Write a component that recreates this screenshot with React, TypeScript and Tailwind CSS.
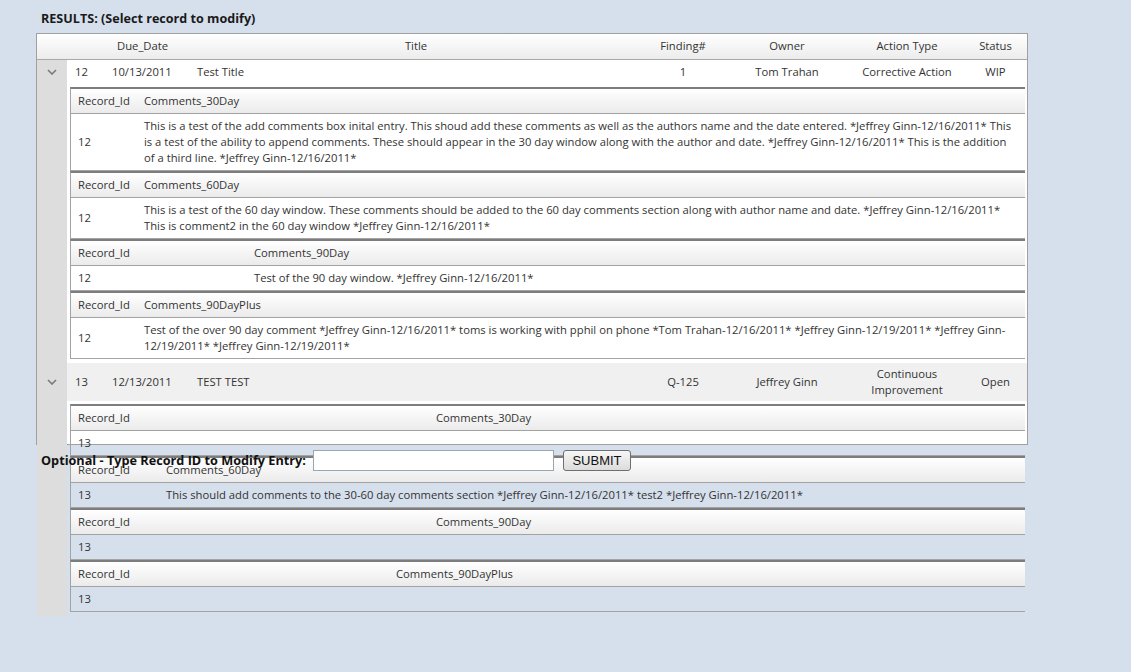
import React from 'react';

interface SubTable {
  label: string;
  // width of the Record_Id column, in px
  idWidth: number;
  id: string;
  lines: string[];
}

interface RecordRow {
  id: string;
  due: string;
  title: string;
  finding: string;
  owner: string;
  action: string[];
  status: string;
  shaded: boolean;
  details: SubTable[];
}

const records: RecordRow[] = [
  {
    id: '12',
    due: '10/13/2011',
    title: 'Test Title',
    finding: '1',
    owner: 'Tom Trahan',
    action: ['Corrective Action'],
    status: 'WIP',
    shaded: false,
    details: [
      {
        label: 'Comments_30Day',
        idWidth: 66,
        id: '12',
        lines: [
          'This is a test of the add comments box inital entry. This shoud add these comments as well as the authors name and the date entered. *Jeffrey Ginn-12/16/2011* This',
          'is a test of the ability to append comments. These should appear in the 30 day window along with the author and date. *Jeffrey Ginn-12/16/2011* This is the addition',
          'of a third line. *Jeffrey Ginn-12/16/2011*',
        ],
      },
      {
        label: 'Comments_60Day',
        idWidth: 66,
        id: '12',
        lines: [
          'This is a test of the 60 day window. These comments should be added to the 60 day comments section along with author name and date. *Jeffrey Ginn-12/16/2011*',
          'This is comment2 in the 60 day window *Jeffrey Ginn-12/16/2011*',
        ],
      },
      {
        label: 'Comments_90Day',
        idWidth: 176,
        id: '12',
        lines: ['Test of the 90 day window. *Jeffrey Ginn-12/16/2011*'],
      },
      {
        label: 'Comments_90DayPlus',
        idWidth: 66,
        id: '12',
        lines: [
          'Test of the over 90 day comment *Jeffrey Ginn-12/16/2011* toms is working with pphil on phone *Tom Trahan-12/16/2011* *Jeffrey Ginn-12/19/2011* *Jeffrey Ginn-',
          '12/19/2011* *Jeffrey Ginn-12/19/2011*',
        ],
      },
    ],
  },
  {
    id: '13',
    due: '12/13/2011',
    title: 'TEST TEST',
    finding: 'Q-125',
    owner: 'Jeffrey Ginn',
    action: ['Continuous', 'Improvement'],
    status: 'Open',
    shaded: true,
    details: [
      { label: 'Comments_30Day', idWidth: 358, id: '13', lines: [''] },
      {
        label: 'Comments_60Day',
        idWidth: 88,
        id: '13',
        lines: ['This should add comments to the 30-60 day comments section *Jeffrey Ginn-12/16/2011* test2 *Jeffrey Ginn-12/16/2011*'],
      },
      { label: 'Comments_90Day', idWidth: 358, id: '13', lines: [''] },
      { label: 'Comments_90DayPlus', idWidth: 318, id: '13', lines: [''] },
    ],
  },
];

const cols = 'grid grid-cols-[30px_38px_85px_452px_82px_126px_114px_63px]';

function Chevron() {
  return (
    <svg width="10" height="6" viewBox="0 0 10 6" className="block">
      <polyline points="1,1 5,5 9,1" fill="none" stroke="#7a7a7a" strokeWidth="1.6" />
    </svg>
  );
}

function DetailTable({ t }: { t: SubTable }) {
  return (
    <div className="border-t-2 border-l border-t-[#7d7d7d] border-l-[#a3a3a3]">
      {/* sub header */}
      <div className="flex h-[25px] items-center bg-gradient-to-b from-white to-[#ebebeb] border-b border-[#a3a3a3]">
        <div className="pl-[7px] shrink-0" style={{ width: t.idWidth }}>Record_Id</div>
        <div className="pl-[7px]">{t.label}</div>
      </div>
      {/* sub data */}
      <div className="flex items-center py-[4px] leading-[16px] border-b border-[#a3a3a3]">
        <div className="pl-[7px] shrink-0" style={{ width: t.idWidth }}>{t.id}</div>
        <div className="pl-[7px] whitespace-nowrap min-h-[16px]">
          {t.lines.map((l, i) => (
            <div key={i}>{l}</div>
          ))}
        </div>
      </div>
    </div>
  );
}

function Record({ r }: { r: RecordRow }) {
  return (
    <>
      <div className={`${cols} items-center ${r.shaded ? 'h-[38px] bg-[#f0f0f0]' : 'h-[24px] bg-white'}`}>
        <div className="h-full bg-[#dddddd] flex items-center justify-center">
          <Chevron />
        </div>
        <div className="pl-[8px]">{r.id}</div>
        <div className="pl-[7px]">{r.due}</div>
        <div className="pl-[7px]">{r.title}</div>
        <div className="text-center">{r.finding}</div>
        <div className="text-center">{r.owner}</div>
        <div className="text-center leading-[16px]">
          {r.action.map((a) => (
            <div key={a}>{a}</div>
          ))}
        </div>
        <div className="text-center">{r.status}</div>
      </div>
      <div className="flex">
        <div className="w-[30px] shrink-0 bg-[#dddddd]" />
        <div className="flex-1 pl-[3px] pr-[2px] pt-[3px] pb-[4px]">
          {r.details.map((t) => (
            <DetailTable key={t.label} t={t} />
          ))}
        </div>
      </div>
    </>
  );
}

export default function App() {
  return (
    <div className="min-h-screen bg-[#d6e0ec] pt-[10px] font-['Open_Sans',sans-serif] text-[11.25px] text-[#333333]">
      <div className="pl-[41px] h-[18px] leading-[18px] font-bold text-[12.6px] text-[#1a1a1a]">
        RESULTS: (Select record to modify)
      </div>

      <div className="ml-[36px] mt-[5px] w-[992px] h-[412px] border border-[#a0a0a0] bg-white">
        {/* column headers */}
        <div className={`${cols} h-[26px] items-center bg-gradient-to-b from-white to-[#ececec] border-b border-[#a9a9a9]`}>
          <div />
          <div />
          <div className="pl-[12px]">Due_Date</div>
          <div className="text-center">Title</div>
          <div className="text-center">Finding#</div>
          <div className="text-center">Owner</div>
          <div className="text-center">Action Type</div>
          <div className="text-center">Status</div>
        </div>
        {records.map((r) => (
          <Record key={r.id} r={r} />
        ))}
      </div>

      <div className="mt-[4px] flex items-center h-[23px] pl-[41px]">
        <span className="w-[272px] shrink-0 font-bold text-[12.7px] text-[#111111]">
          Optional - Type Record ID to Modify Entry:
        </span>
        <input
          type="text"
          className="w-[241px] h-[21px] bg-white border border-[#9aa6b4] outline-none px-1"
        />
        <button className="ml-[9px] w-[68px] h-[21px] rounded-[3px] border border-[#6f6f6f] bg-gradient-to-b from-[#f6f6f6] to-[#dcdcdc] font-['Liberation_Sans',Arial,sans-serif] text-[13px] text-[#111111] leading-none">
          SUBMIT
        </button>
      </div>
    </div>
  );
}
